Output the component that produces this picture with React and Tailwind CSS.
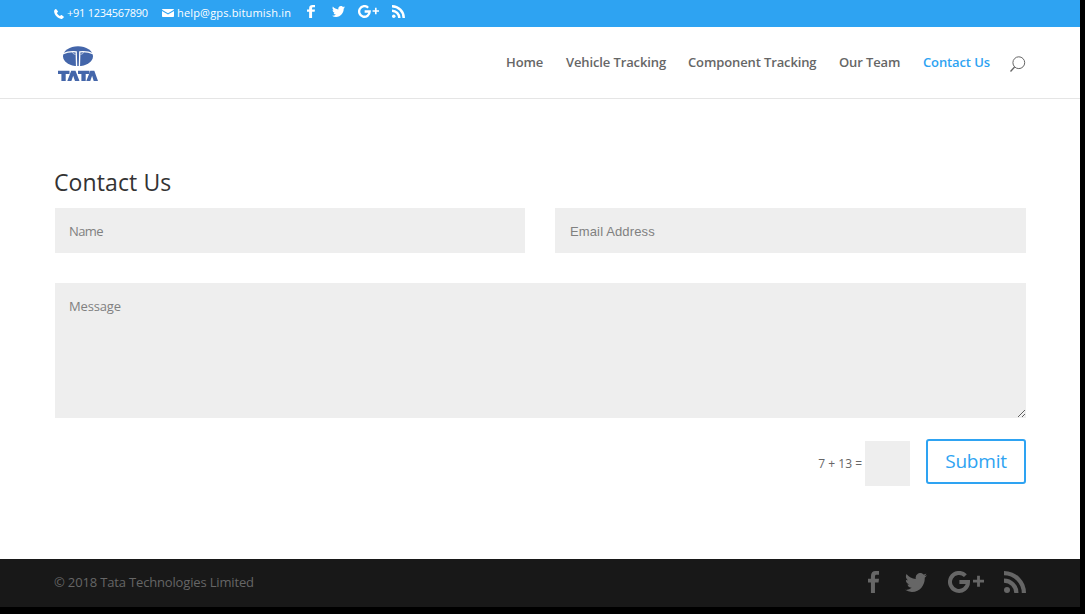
import React from "react";

const Facebook = ({ className }) => (
  <svg viewBox="0 0 12 22" preserveAspectRatio="none" fill="currentColor" className={className}>
    <path d="M3.2 22V11.6H0V7.8h3.2V5.4C3.2 1.8 5.1 0 8.3 0H12v3.8H9.6C8.1 3.8 7.6 4.4 7.6 5.7v2.1H12l-.5 3.8H7.6V22z" />
  </svg>
);

const Twitter = ({ className }) => (
  <svg viewBox="0 2.2 24 19.6" preserveAspectRatio="none" fill="currentColor" className={className}>
    <path d="M23.953 4.57a10 10 0 01-2.825.775 4.958 4.958 0 002.163-2.723c-.951.555-2.005.959-3.127 1.184a4.92 4.92 0 00-8.384 4.482C7.69 8.095 4.067 6.13 1.64 3.162a4.822 4.822 0 00-.666 2.475c0 1.71.87 3.213 2.188 4.096a4.904 4.904 0 01-2.228-.616v.06a4.923 4.923 0 003.946 4.827 4.996 4.996 0 01-2.212.085 4.936 4.936 0 004.604 3.417 9.867 9.867 0 01-6.102 2.105c-.39 0-.779-.023-1.17-.067a13.995 13.995 0 007.557 2.209c9.053 0 13.998-7.496 13.998-13.985 0-.21 0-.42-.015-.63A9.935 9.935 0 0024 4.59z" />
  </svg>
);

const GooglePlus = ({ className }) => (
  <svg viewBox="0 0 36 22" preserveAspectRatio="none" fill="none" stroke="currentColor" className={className}>
    <path d="M17.4 4.6A9 9 0 1 0 20 11H11.4" strokeWidth="4" />
    <path d="M25 10.2h11M30.5 4.7v11" strokeWidth="2.8" />
  </svg>
);

const Rss = ({ className }) => (
  <svg viewBox="0 0 22 22" preserveAspectRatio="none" fill="currentColor" className={className}>
    <circle cx="3" cy="19" r="3" />
    <path d="M0 0a22 22 0 0 1 22 22h-4.2A17.8 17.8 0 0 0 0 4.2z" />
    <path d="M0 7.5A14.5 14.5 0 0 1 14.5 22h-4.2A10.3 10.3 0 0 0 0 11.7z" />
  </svg>
);

const Phone = () => (
  <svg viewBox="0 0 10 10" fill="currentColor" className="mt-px h-[10px] w-[10px]">
    <path d="M2.3.2 3.9 2.3c.2.3.1.6-.1.8l-.9.8c.6 1.3 1.8 2.5 3.1 3.2l.8-.9c.2-.2.6-.3.8-.1l2 1.5c.3.2.3.6.1.8C9 9.3 8.2 9.9 7.3 9.9 3.7 9.5.4 5.9.1 2.5.1 1.5.7.7 1.6.1c.2-.1.5-.1.7.1z" />
  </svg>
);

const Mail = () => (
  <svg viewBox="0 0 12 8" fill="currentColor" className="-mt-px h-[8px] w-[12px]">
    <path d="M.8 0h10.4q.8 0 .8.8L6 4.2 0 .8Q0 0 .8 0zM0 2l6 3.4L12 2v5.2q0 .8-.8.8H.8Q0 8 0 7.2z" />
  </svg>
);

const Logo = () => (
  <svg viewBox="0 0 40 36" className="h-[36px] w-[40px]">
    <ellipse cx="20" cy="10.2" rx="15" ry="9.9" fill="#4466aa" />
    <path
      d="M4.5 7.8Q11 5 18.2 5.8L18.6 20.5M35.5 7.8Q29 5 21.8 5.8L21.4 20.5"
      fill="none"
      stroke="#fff"
      strokeWidth="1.3"
    />
    <path d="M14.5 6Q14.5 8 17.5 8.5M25.500 6Q25.500 8 22.500 8.500" fill="none" stroke="#fff" strokeWidth=".6" />
    <g fill="#4466aa">
      <path d="M0 24.7h11.5v3.4H7.7V35H3.4v-6.900H0zM20 24.700h11.500v3.400h-3.800V35h-4.300v-6.900H20z" />
      <path d="M13.200 24.700h4.300L21.500 35h-4.500l-1.800-5.300-1.800 5.300H9.300zM32.300 24.700h4L40 35h-4.300l-1.600-5.300-1.800 5.300h-4z" />
    </g>
  </svg>
);

const Search = () => (
  <svg viewBox="0 0 16 16" fill="none" stroke="#666" className="mt-[16px] h-4 w-4">
    <circle cx="8.8" cy="6.7" r="5.9" />
    <path d="M4.6 11 .5 15.5" strokeWidth="1.3" />
  </svg>
);

export default function App() {
  return (
    <div className="h-[614px] w-full overflow-hidden bg-black font-['Open_Sans',sans-serif] text-[#666]">
      <div className="flex h-[607px] w-[1080px] flex-col bg-white">
        <div className="flex h-[27px] shrink-0 items-start bg-[#2ea3f2] pl-[54px] text-[11px] leading-[26px] text-white">
          <div className="flex w-[108px] items-center">
            <Phone />
            <span className="ml-[3px] whitespace-nowrap tracking-[-0.27px]">+91 1234567890</span>
          </div>
          <div className="flex w-[145px] items-center">
            <Mail />
            <span className="ml-[3px] whitespace-nowrap tracking-[0.17px]">help@gps.bitumish.in</span>
          </div>
          <div className="flex h-[23px] items-center">
            <Facebook className="h-[13px] w-[8px]" />
            <Twitter className="ml-[17px] h-[11px] w-[13px]" />
            <GooglePlus className="ml-[13px] h-[13px] w-[21px]" />
            <Rss className="ml-[13px] h-[13px] w-[13px]" />
          </div>
        </div>

        <header className="flex h-[72px] shrink-0 border-b border-[#e5e5e5] pl-[58px]">
          <div className="w-[448px] pt-[19px]">
            <Logo />
          </div>
          <nav className="flex pt-[13px] text-[13px] leading-[44px] font-semibold tracking-[-0.12px] whitespace-nowrap">
            <a className="w-[60px]">Home</a>
            <a className="w-[122px]">Vehicle Tracking</a>
            <a className="w-[151px]">Component Tracking</a>
            <a className="w-[84px]">Our Team</a>
            <a className="w-[87px] text-[#2ea3f2]">Contact Us</a>
            <Search />
          </nav>
        </header>

        <main className="flex grow flex-col pr-[54px] pl-[55px]">
          <h1 className="-ml-px mt-[69px] h-[40px] text-[23px] leading-[28px] tracking-[0.1px] text-[#333]">
            Contact Us
          </h1>
          <div className="flex gap-[30px]">
            <input
              placeholder="Name"
              className="h-[45px] w-[470px] bg-[#eee] px-[14px] text-[13px] tracking-[-0.6px] placeholder:text-[#808080]"
            />
            <input
              placeholder="Email Address"
              className="h-[45px] w-[471px] bg-[#eee] px-[15px] pt-[2px] font-['Liberation_Sans',sans-serif] text-[13px] tracking-[0.13px] placeholder:text-[#808080]"
            />
          </div>
          <textarea
            placeholder="Message"
            className="mt-[30px] h-[135px] w-[971px] shrink-0 resize-y bg-[#eee] px-[14px] py-[14px] text-[13px] leading-[19px] tracking-[-0.15px] placeholder:text-[#808080]"
          />
          <div className="mt-[21px] flex justify-end">
            <span className="mt-[2px] mr-[3px] text-[12px] leading-[45px] whitespace-nowrap">7 + 13 =</span>
            <input className="mt-[2px] h-[45px] w-[45px] bg-[#eee]" />
            <button className="ml-[16px] h-[45px] w-[100px] rounded-[3px] border-2 border-[#2ea3f2] pb-[2px] text-[19px] leading-[38px] tracking-[-0.2px] text-[#2ea3f2]">
              Submit
            </button>
          </div>
        </main>

        <footer className="flex h-[48px] shrink-0 justify-between bg-[#181818] pr-[54px] pl-[54px]">
          <p className="text-[13px] leading-[47px] tracking-[-0.16px] whitespace-nowrap">
            © 2018 Tata Technologies Limited
          </p>
          <div className="flex h-[46px] items-center">
            <Facebook className="h-[22px] w-[11px]" />
            <Twitter className="ml-[26px] h-[19px] w-[22px]" />
            <GooglePlus className="ml-[21px] h-[22px] w-[36px]" />
            <Rss className="ml-[20px] h-[22px] w-[22px]" />
          </div>
        </footer>
      </div>
    </div>
  );
}
